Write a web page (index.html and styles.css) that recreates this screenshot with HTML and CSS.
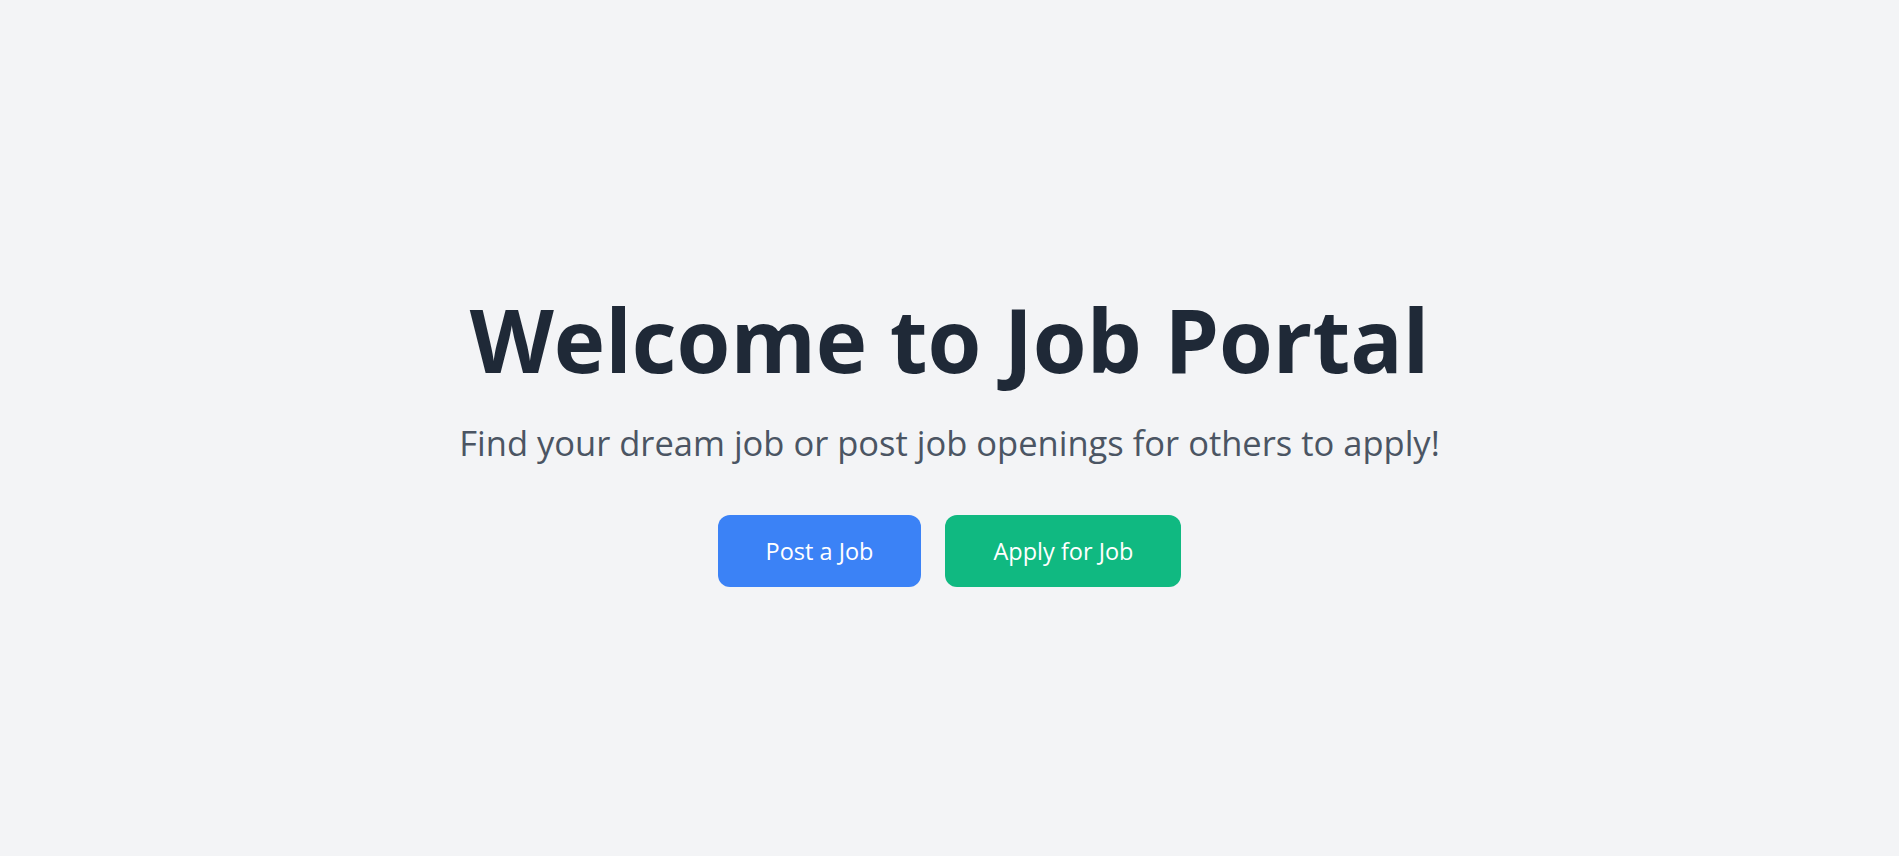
FILE: index.html
```html
<!DOCTYPE html>
<html lang="en">
<head>
<meta charset="utf-8">
<title>Job Portal</title>
<link rel="stylesheet" href="styles.css">
</head>
<body>
<main class="hero">
  <h1 class="hero-title">Welcome to Job Portal</h1>
  <p class="hero-subtitle">Find your dream job or post job openings for others to apply!</p>
  <div class="hero-actions">
    <a class="btn btn-blue" href="#">Post a Job</a>
    <a class="btn btn-green" href="#">Apply for Job</a>
  </div>
</main>
</body>
</html>
```
FILE: styles.css
```css
* { box-sizing: border-box; }
html, body { margin: 0; padding: 0; }
body {
  background: #f3f4f6;
  font-family: "Open Sans", "Noto Sans", sans-serif;
}
.hero {
  min-height: 100vh;
  padding-top: 26px;
  display: flex;
  flex-direction: column;
  align-items: center;
  justify-content: center;
  text-align: center;
}
.hero-title {
  margin: 0;
  font-size: 87px;
  line-height: 1;
  font-weight: 700;
  color: #1f2937;
}
.hero-subtitle {
  margin: 40px 0 0;
  font-size: 34.5px;
  line-height: 40px;
  color: #4b5563;
}
.hero-actions {
  margin-top: 52px;
  display: flex;
  gap: 24px;
}
.btn {
  display: block;
  padding: 20px 48px;
  font-size: 23.5px;
  line-height: 32px;
  color: #ffffff;
  text-decoration: none;
  border-radius: 12px;
}
.btn-blue { background: #3b82f6; }
.btn-green { background: #10b981; }
```
